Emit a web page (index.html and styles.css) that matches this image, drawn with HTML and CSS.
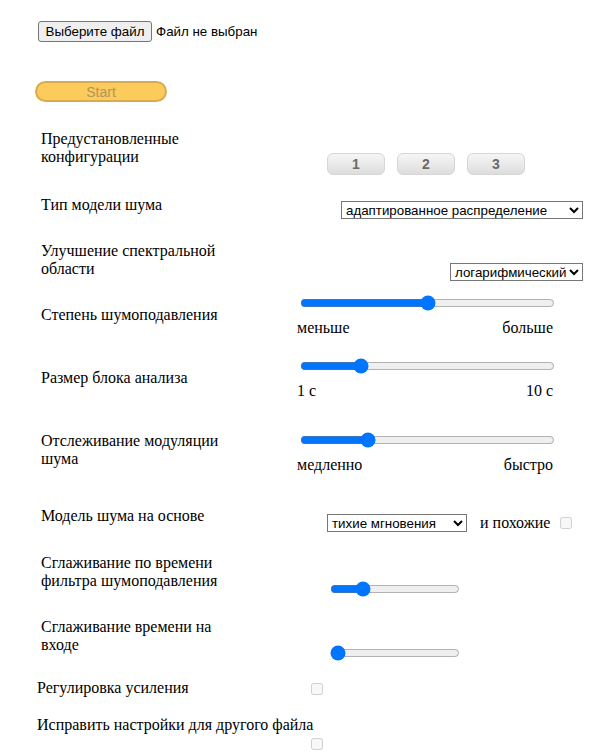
FILE: index.html
```html
<!DOCTYPE html>
<html lang="ru">
<head>
<meta charset="utf-8">
<title>Шумоподавление</title>
<link rel="stylesheet" href="styles.css">
</head>
<body>
<div class="page">
  <div class="file-row">
    <button class="file-btn" type="button">Выберите файл</button>
    <span class="file-name">Файл не выбран</span>
  </div>

  <div class="start-row">
    <button class="start-btn" type="button" disabled>Start</button>
  </div>

  <div class="row row-presets">
    <div class="label">Предустановленные конфигурации</div>
    <div class="ctrl presets">
      <button class="preset" type="button">1</button>
      <button class="preset" type="button">2</button>
      <button class="preset" type="button">3</button>
    </div>
  </div>

  <div class="row row-type">
    <div class="label">Тип модели шума</div>
    <div class="ctrl ctrl-end">
      <select class="sel sel-type">
        <option>адаптированное распределение</option>
      </select>
    </div>
  </div>

  <div class="row row-spectral">
    <div class="label">Улучшение спектральной области</div>
    <div class="ctrl ctrl-end">
      <select class="sel sel-spectral">
        <option>логарифмический</option>
      </select>
    </div>
  </div>

  <div class="row row-strength">
    <div class="label label-mid">Степень шумоподавления</div>
    <div class="ctrl slider-block">
      <input class="range range-wide" type="range" min="0" max="100" value="50">
      <div class="scale"><span>меньше</span><span>больше</span></div>
    </div>
  </div>

  <div class="row row-block">
    <div class="label label-mid">Размер блока анализа</div>
    <div class="ctrl slider-block">
      <input class="range range-wide" type="range" min="1" max="10" value="3">
      <div class="scale"><span>1 с</span><span>10 с</span></div>
    </div>
  </div>

  <div class="row row-tracking">
    <div class="label">Отслеживание модуляции шума</div>
    <div class="ctrl slider-block">
      <input class="range range-wide" type="range" min="0" max="100" value="25">
      <div class="scale"><span>медленно</span><span>быстро</span></div>
    </div>
  </div>

  <div class="row row-model">
    <div class="label">Модель шума на основе</div>
    <div class="ctrl model">
      <select class="sel sel-model">
        <option>тихие мгновения</option>
      </select>
      <span class="similar">и похожие</span>
      <input class="check" type="checkbox" disabled>
    </div>
  </div>

  <div class="row row-smooth">
    <div class="label">Сглаживание по времени фильтра шумоподавления</div>
    <div class="ctrl small-slider">
      <input class="range range-small" type="range" min="0" max="100" value="22">
    </div>
  </div>

  <div class="row row-input">
    <div class="label">Сглаживание времени на входе</div>
    <div class="ctrl small-slider">
      <input class="range range-small" type="range" min="0" max="100" value="0">
    </div>
  </div>

  <div class="row row-gain">
    <div class="label">Регулировка усиления</div>
    <div class="ctrl gain-ctrl">
      <input class="check" type="checkbox" disabled>
    </div>
  </div>

  <div class="fix-row">
    <div class="label">Исправить настройки для другого файла</div>
    <div class="fix-ctrl">
      <input class="check" type="checkbox" disabled>
    </div>
  </div>
</div>
</body>
</html>
```

FILE: styles.css
```css
html, body {
  margin: 0;
  padding: 0;
  background: #ffffff;
}

body {
  font-family: "Liberation Serif", "Times New Roman", serif;
  font-size: 16px;
  line-height: 18px;
  color: #000000;
}

.page {
  padding: 21px 25px 0 0;
}

/* file chooser */
.file-row {
  display: flex;
  align-items: center;
  padding-left: 38px;
  height: 21px;
}

.file-btn {
  box-sizing: border-box;
  width: 114px;
  height: 21px;
  padding: 0;
  margin: 0;
  background: #efefef;
  border: 1px solid #767676;
  border-radius: 3px;
  font-family: "Liberation Sans", Arial, sans-serif;
  font-size: 13.33px;
  color: #000000;
}

.file-name {
  margin-left: 4px;
  font-family: "Liberation Sans", Arial, sans-serif;
  font-size: 13.33px;
  line-height: 16px;
}

/* start */
.start-row {
  margin-top: 39px;
  padding-left: 35px;
  height: 21px;
}

.start-btn {
  box-sizing: border-box;
  width: 132px;
  height: 21px;
  padding: 0;
  margin: 0;
  background: #fdcb5b;
  border: 2px solid #d9ab4f;
  border-radius: 11px;
  font-family: "Liberation Sans", Arial, sans-serif;
  font-size: 14px;
  color: #b0955c;
}

/* rows */
.row {
  display: grid;
  grid-template-columns: 256px 1fr;
  align-items: start;
  padding-left: 41px;
}

.label {
  width: 195px;
  padding-top: 1px;
}

.label-mid {
  padding-top: 12px;
}

.ctrl-end {
  display: flex;
  justify-content: flex-end;
}

.row-presets { margin-top: 27px; }
.row-type { margin-top: 20px; }
.row-spectral { margin-top: 22px; }
.row-strength { margin-top: 13px; }
.row-block { margin-top: 20px; }
.row-tracking { margin-top: 31px; }
.row-model { margin-top: 32px; }
.row-smooth { margin-top: 21px; }
.row-input { margin-top: 20px; }

/* presets */
.presets {
  display: flex;
  gap: 12px;
  padding-top: 24px;
  padding-left: 30px;
}

.preset {
  box-sizing: border-box;
  width: 58px;
  height: 22px;
  margin: 0;
  padding: 0;
  background: linear-gradient(#f6f6f6, #dddddd);
  border: 1px solid #d6d6d6;
  border-radius: 6px;
  font-family: "Liberation Sans", Arial, sans-serif;
  font-weight: bold;
  font-size: 14px;
  color: #6a6a6a;
}

/* selects */
.sel {
  box-sizing: border-box;
  height: 18px;
  margin: 0;
  font-family: "Liberation Sans", Arial, sans-serif;
  font-size: 13.33px;
  color: #000000;
  background: #ffffff;
  border: 1px solid #767676;
  border-radius: 0;
}

.row-type .ctrl { padding-top: 6px; }
.row-spectral .ctrl { padding-top: 22px; }

.sel-type { width: 242px; }
.sel-spectral { width: 133px; }
.sel-model { width: 140px; }

/* sliders */
.slider-block {
  padding-top: 1px;
}

.range {
  margin: 0;
  height: 16px;
  display: block;
}

.range-wide {
  width: 255px;
  margin-left: 3px;
}

.range-small {
  width: 130px;
  margin-left: 33px;
}

.scale {
  display: flex;
  justify-content: space-between;
  width: 256px;
  margin-top: 8px;
}

.small-slider {
  padding-top: 28px;
}

/* model row */
.model {
  display: flex;
  align-items: center;
  padding-top: 8px;
  padding-left: 30px;
}

.similar {
  margin-left: 13px;
}

.check {
  box-sizing: border-box;
  display: block;
  width: 12px;
  height: 12px;
  margin: 0;
}

.model .check {
  margin-left: 10px;
}

/* gain / fix rows */
.row-gain {
  grid-template-columns: 274px 1fr;
  padding-left: 37px;
  margin-top: 17px;
}

.row-gain .label {
  width: auto;
}

.gain-ctrl {
  padding-top: 5px;
}

.fix-row {
  margin-top: 18px;
  padding-left: 37px;
}

.fix-row .label {
  width: auto;
}

.fix-ctrl {
  padding-top: 4px;
  padding-left: 274px;
}
```
